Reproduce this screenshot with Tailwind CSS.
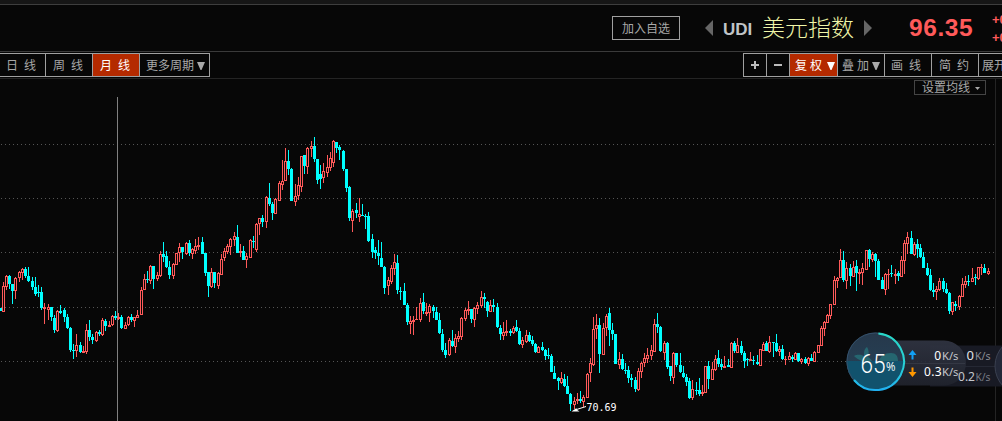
<!DOCTYPE html>
<html lang="zh-CN">
<head>
    <meta charset="UTF-8">
    <meta name="viewport" content="width=device-width, initial-scale=1.0">
    <title>美元指数</title>
    <script src="https://cdn.jsdelivr.net/npm/@tailwindcss/browser@4"></script>
</head>
<body class="w-[1002px] h-[421px] overflow-hidden bg-[#070707] text-[#a8a8a8] font-['Liberation_Sans','Noto_Sans_CJK_SC',sans-serif]">
    <div class="relative flex h-full flex-col overflow-hidden">

        <div class="h-[5px] shrink-0 border-b border-[#3e3e3e] bg-[#161616]"></div>

        <!-- Cotação -->
        <header class="flex h-[47px] shrink-0 items-center border-b border-[#3a3a3a] pl-[612px] whitespace-nowrap">
            <button class="flex h-6 w-[68px] shrink-0 items-center justify-center border border-[#a0a0a0] pt-px text-[12px] leading-none">加入自选</button>
            <svg class="ml-[25px] h-4 w-2 shrink-0" viewBox="0 0 8 16"><path d="M8 0v16L0 8z" fill="#666"/></svg>
            <span class="ml-[10px] w-[39px] shrink-0 pt-[2px] text-[17px] font-bold leading-none text-[#c0c4c8]">UDI</span>
            <span class="w-[102px] shrink-0 text-[23px] font-light leading-none text-[#f0f6a8]">美元指数</span>
            <svg class="h-4 w-2 shrink-0" viewBox="0 0 8 16"><path d="M0 0v16l8-8z" fill="#666"/></svg>
            <span class="ml-[37px] w-[83px] shrink-0 text-[24.5px] font-bold leading-none tracking-[0.6px] text-[#ff5a5a]">96.35</span>
            <div class="shrink-0 pt-[2px] text-[13px] font-bold leading-[18px] text-[#ff5a5a]">
                <div>+0</div>
                <div>+0</div>
            </div>
        </header>

        <!-- Períodos e ferramentas -->
        <nav class="mt-px flex h-6 shrink-0 justify-between text-[12px] leading-none whitespace-nowrap">
            <div class="flex shrink-0 border-y border-[#a0a0a0]">
                <div class="flex w-[46px] items-center gap-[6px] border-r border-[#a0a0a0] pl-[6px] pt-px"><span>日</span><span>线</span></div>
                <div class="flex w-[47px] items-center gap-[6px] border-r border-[#a0a0a0] pl-[7px] pt-px"><span>周</span><span>线</span></div>
                <div class="flex w-[47px] items-center gap-[6px] border-r border-[#a0a0a0] bg-[#b42a00] pl-[7px] pt-px text-white"><span>月</span><span>线</span></div>
                <div class="flex w-[70px] items-center gap-[3px] border-r border-[#a0a0a0] pl-[6px] pt-px">
                    <span>更多周期</span>
                    <svg class="h-2 w-2" viewBox="0 0 8 8"><path d="M0 0h8L4.500 8h-1z" fill="#aaa"/></svg>
                </div>
            </div>
            <div class="flex w-[259px] shrink-0 overflow-hidden border-y border-l border-[#a0a0a0]">
                <div class="flex w-[23px] shrink-0 items-center justify-center border-r border-[#a0a0a0]"><svg class="size-2" viewBox="0 0 8 8"><path d="M0 4h8M4 0v8" stroke="#bbb" stroke-width="2"/></svg></div>
                <div class="flex w-[23px] shrink-0 items-center justify-center border-r border-[#a0a0a0]"><svg class="size-2" viewBox="0 0 8 8"><path d="M0 4h8" stroke="#bbb" stroke-width="2"/></svg></div>
                <div class="flex w-12 shrink-0 items-center gap-[3px] border-r border-[#a0a0a0] bg-[#b42a00] pl-[5px] pt-px text-white">
                    <span>复</span><span>权</span>
                    <svg class="ml-[2px] h-2 w-2 shrink-0" viewBox="0 0 8 8"><path d="M0 0h8L4.500 8h-1z" fill="#fff"/></svg>
                </div>
                <div class="flex w-[47px] shrink-0 items-center gap-[3px] border-r border-[#a0a0a0] pl-[4px] pt-px">
                    <span>叠</span><span>加</span>
                    <svg class="h-2 w-2 shrink-0" viewBox="0 0 8 8"><path d="M0 0h8L4.500 8h-1z" fill="#aaa"/></svg>
                </div>
                <div class="flex w-[47px] shrink-0 items-center gap-[6px] border-r border-[#a0a0a0] pl-[6px] pt-px"><span>画</span><span>线</span></div>
                <div class="flex w-[47px] shrink-0 items-center gap-[6px] border-r border-[#a0a0a0] pl-[7px] pt-px"><span>简</span><span>约</span></div>
                <div class="flex shrink-0 items-center pl-[3px] pt-px">展开</div>
            </div>
        </nav>

        <!-- Gráfico -->
        <main class="relative mt-px h-[343px] shrink-0 border-t border-[#242424]">
            <svg id="chart" class="absolute left-0 top-[-79px] h-[421px] w-[1002px] pointer-events-none" viewBox="0 0 1002 421" shape-rendering="crispEdges">
                <path d="M1 144.500H995M1 198.500H995M1 252.500H995M1 307.500H995M1 361.500H995" stroke="#555" stroke-dasharray="1 3"/>
                <path d="M995.500 79V421" stroke="#242424"/>
                <path d="M117.500 97V421" stroke="#808080"/>
                <g id="candles"></g>
                <g shape-rendering="auto">
                    <path d="M586 406.500L575 410" stroke="#fff" stroke-width="1"/>
                    <path d="M571.500 411.500l5-3.500v1.500l3 2z" fill="#fff"/>
                    <text x="586.500" y="411" fill="#fff" font-size="10" font-family="DejaVu Sans Mono, monospace">70.69</text>
                </g>
            </svg>
            <div class="relative ml-[914px] mt-px flex h-[15px] w-[72px] items-center border border-[#444] pl-[7px] pt-px text-[12px] leading-none whitespace-nowrap">
                设置均线
                <svg class="ml-[5px] h-[3px] w-[5px]" viewBox="0 0 5 3"><path d="M0 0h5L2.500 3z" fill="#aaa"/></svg>
            </div>
        </main>

        <!-- Widget flutuante de memória e rede -->
        <svg class="absolute left-[830px] top-[320px] h-[101px] w-[172px] font-['Noto_Sans',sans-serif]" viewBox="830 320 172 101">
            <defs>
                <linearGradient id="pill" x1="0" y1="0" x2="0" y2="1"><stop offset="0" stop-color="#303442"/><stop offset="1" stop-color="#20232d"/></linearGradient>
                <linearGradient id="ring" x1="0" y1="0" x2="0" y2="1"><stop offset="0" stop-color="#28d8c8"/><stop offset=".6" stop-color="#28d0d8"/><stop offset="1" stop-color="#20b0f0"/></linearGradient>
                <linearGradient id="sky" x1="0" y1="0" x2="0" y2="1"><stop offset="0" stop-color="#26384b"/><stop offset="1" stop-color="#25445a"/></linearGradient>
                <clipPath id="ball"><circle cx="875.500" cy="361.500" r="29"/></clipPath>
            </defs>
            <rect x="930" y="345.500" width="85" height="41" fill="#181a24"/>
            <path d="M960 366.500H996" stroke="#252834"/>
            <circle cx="1024" cy="366" r="29" fill="#232838" stroke="#3a4050"/>
            <path d="M876 340.500H944a22 22.500 0 0 1 0 45H876z" fill="url(#pill)" fill-opacity=".93"/>
            <path d="M905 363.500H965" stroke="#3a3e4a" stroke-opacity=".7"/>
            <text x="966.500" y="360" font-size="13" fill="#e0e2e6">0</text>
            <text x="975" y="360" font-size="10.500" fill="#8a8d95" textLength="15.500" lengthAdjust="spacingAndGlyphs">K/s</text>
            <text x="958" y="381" font-size="13" fill="#c4c7cd" textLength="17" lengthAdjust="spacingAndGlyphs">0.2</text>
            <text x="975.500" y="381" font-size="10.500" fill="#777b84" textLength="15" lengthAdjust="spacingAndGlyphs">K/s</text>
            <path d="M912.500 350l4 5h-3v4.500h-2V355h-3z" fill="#12a0f4"/>
            <path d="M912.500 377l4-5h-3v-4.500h-2v4.500h-3z" fill="#ff9800"/>
            <text x="934.300" y="359.500" font-size="12" fill="#fff">0</text>
            <text x="942" y="359.500" font-size="11.500" fill="#c4c6cc" textLength="16.500" lengthAdjust="spacingAndGlyphs">K/s</text>
            <text x="924" y="376.300" font-size="12" fill="#fff" textLength="17.500">0.3</text>
            <text x="942" y="376.300" font-size="11.500" fill="#c4c6cc" textLength="16.500" lengthAdjust="spacingAndGlyphs">K/s</text>
            <g clip-path="url(#ball)">
                <rect x="846" y="332" width="60" height="60" fill="url(#sky)"/>
                <path d="M854 356c4-2 7-1 10 0 0-4 0-7 3-9 2 3 2 6 1 10 2 1 3 2 4 4H862c-3-1-6-3-8-5zM879 361c1-5 6-8 12-8 5 0 7 3 7 8z" fill="#256670"/>
                <rect x="846" y="361" width="60" height="31" fill="#11526d"/>
            </g>
            <circle cx="875.500" cy="361.500" r="28.500" fill="none" stroke="#34506a"/>
            <path d="M878.400 333.600A28.300 28.300 0 1 1 854 380" fill="none" stroke="url(#ring)" stroke-width="2"/>
            <text x="860.500" y="373" font-size="26" font-family="Roboto, sans-serif" font-weight="300" fill="#fff" textLength="25" lengthAdjust="spacingAndGlyphs">65</text>
            <text x="886" y="371" font-size="12.500" fill="#e8f0f4" textLength="9.500" lengthAdjust="spacingAndGlyphs">%</text>
        </svg>
    </div>

    <script>
        // x, máxima, topo do corpo, base do corpo, mínima, 1 = alta / 0 = baixa
        const data = `0 308 308 311 311 0;3 282 286 312 312 1;6 275 276 287 290 1;9 275 276 284 289 0;12 284 284 291 304 0;15 277 278 291 299 1;19 271 272 278 282 1;22 268 269 273 280 1;25 267 269 276 278 0;28 267 276 281 282 0
32 277 281 287 290 0;35 277 287 294 296 0;38 285 292 293 297 0;41 287 292 308 310 0;44 303 307 309 324 1;48 304 307 310 320 1;51 307 307 317 321 0;54 315 318 330 333 0;57 310 311 331 332 1;60 305 311 313 314 0
64 308 310 317 322 0;67 314 317 328 329 0;70 327 328 350 352 0;73 344 350 351 359 0;76 334 345 351 357 1;80 342 345 352 353 0;83 346 351 353 353 1;86 324 330 352 354 1;89 320 330 337 341 0;92 334 337 340 344 0
96 331 332 341 342 1;99 330 332 334 336 0;102 318 320 335 336 1;105 319 321 326 331 0;109 321 325 327 327 1;112 315 316 325 326 1;115 311 316 318 320 0;118 313 317 319 320 1;121 315 317 328 329 0;125 322 325 329 329 1
128 316 317 325 326 1;131 314 317 320 322 0;134 317 317 321 327 1;137 310 315 318 318 1;141 287 290 315 315 1;144 274 279 290 290 1;147 271 279 280 283 0;150 265 266 281 284 1;153 266 266 279 289 0;157 272 275 279 281 1
160 251 254 276 277 1;163 242 254 257 262 0;166 251 256 267 268 0;169 261 267 275 279 0;173 263 264 276 279 1;176 253 253 265 265 1;179 243 247 253 262 1;182 247 247 252 259 0;186 242 243 254 255 1;189 240 243 253 256 0
192 248 249 254 259 1;195 239 246 251 254 1;198 237 245 247 250 1;202 237 242 254 254 0;205 253 253 273 276 0;208 272 272 286 297 0;211 268 272 287 288 1;214 272 272 283 288 0;218 272 273 286 289 1;221 254 259 275 275 1
224 248 251 258 261 1;227 244 246 252 254 1;230 238 239 247 255 1;234 232 236 240 246 1;237 225 237 253 253 0;240 244 251 253 257 1;243 246 251 260 260 0;246 253 256 260 268 1;250 239 240 258 258 1;253 236 241 242 248 0
256 223 224 250 252 1;259 218 218 224 235 1;262 215 218 222 227 0;266 196 197 222 228 1;269 183 198 204 206 0;272 202 204 213 220 0;275 198 199 214 214 1;279 181 183 201 201 1;282 160 181 185 190 1;285 148 161 181 181 1
288 150 161 169 175 0;291 168 169 201 201 0;295 184 196 202 206 1;298 177 185 196 200 1;301 156 156 187 192 1;304 155 155 166 174 0;307 147 148 167 174 1;311 141 146 149 157 1;314 137 146 159 162 0;317 159 159 180 184 0
320 165 174 179 189 0;323 163 171 178 183 1;327 155 167 173 177 1;330 152 158 168 171 1;333 140 141 163 167 1;336 142 142 148 153 0;339 145 147 150 160 0;343 150 151 169 171 0;346 169 169 188 192 0;349 186 187 218 221 0
352 209 211 221 232 1;356 203 210 213 218 0;359 198 214 217 222 1;362 204 215 216 216 0;365 214 216 217 229 0;368 212 216 241 242 0;372 234 239 252 258 0;375 247 250 253 259 0;378 240 253 256 265 0;381 242 258 267 267 0
384 266 267 288 294 0;388 277 280 286 295 1;391 265 268 282 284 1;394 254 262 269 275 1;397 255 263 290 294 0;400 287 291 292 300 0;404 283 291 305 305 0;407 303 305 322 325 0;410 316 321 324 334 1;413 316 320 322 335 1
416 307 319 320 320 1;420 298 303 320 322 1;423 293 302 311 314 0;426 303 312 314 316 1;429 304 306 313 322 1;433 305 307 311 318 0;436 307 312 320 320 0;439 313 320 333 334 0;442 329 334 350 352 0;445 343 350 355 358 0
449 338 340 355 356 1;452 330 341 346 347 0;455 334 338 347 353 1;458 331 336 339 342 1;461 317 318 337 340 1;465 308 310 319 321 1;468 301 309 311 315 1;471 309 309 319 323 0;474 307 308 320 327 1;477 302 305 309 314 1
481 291 297 306 308 1;484 293 297 299 308 0;487 301 302 311 317 0;490 300 305 312 312 1;493 299 305 307 312 0;497 303 307 327 328 0;500 325 328 334 340 0;503 322 332 336 340 1;506 320 331 333 336 1;510 329 331 333 336 0
513 326 328 333 334 1;516 320 327 331 332 0;519 328 331 344 345 0;522 337 340 345 348 1;526 330 335 342 343 1;529 332 335 341 342 0;532 336 340 344 346 0;535 343 344 352 353 0;538 346 347 353 353 1;542 342 347 350 351 0
545 349 350 356 360 0;548 348 355 356 359 0;551 354 356 372 372 0;554 366 373 379 379 0;558 377 378 381 390 0;561 372 378 383 384 1;564 374 379 386 387 0;567 376 386 394 394 0;570 393 394 404 411 0;574 397 401 405 409 1
577 393 399 401 404 1;580 391 399 401 403 0;583 395 397 402 407 1;587 373 374 398 398 1;590 358 363 373 382 1;593 317 329 365 366 1;596 314 325 329 339 1;599 318 325 354 373 0;603 323 328 355 355 1;606 314 316 328 336 1
609 308 313 330 346 0;612 323 330 334 340 0;615 334 334 364 364 0;619 352 359 365 369 1;622 354 359 369 370 0;625 363 370 371 374 0;628 366 370 378 383 0;631 374 378 380 387 0;635 377 380 389 392 0;638 368 371 390 391 1
641 362 363 372 378 1;644 353 358 363 367 1;647 348 355 359 363 1;651 345 350 356 360 1;654 319 324 352 352 1;657 313 324 327 333 0;660 326 327 351 352 0;664 341 343 353 360 1;667 342 343 367 369 0;670 366 366 376 381 0
673 352 353 378 384 1;676 353 353 365 367 0;680 353 365 372 373 0;683 366 373 377 378 0;686 374 377 382 386 0;689 378 381 398 399 0;692 380 389 398 400 1;696 382 390 391 395 0;699 378 390 394 396 0;702 385 392 394 396 1
705 366 366 393 393 1;708 361 366 379 389 0;712 362 369 380 380 1;715 355 359 370 371 1;718 350 358 364 367 0;721 359 364 367 370 0;724 356 366 368 368 1;728 359 365 367 367 0;731 342 343 368 368 1;734 341 343 351 353 0
737 338 345 353 353 1;741 341 346 353 355 0;744 351 353 361 368 0;747 358 359 360 366 0;750 352 359 361 361 1;753 356 360 361 365 0;757 355 362 364 365 0;760 349 349 366 366 1;763 342 344 351 351 1;766 341 343 351 351 0
769 336 342 352 353 1;773 342 342 343 357 0;776 334 343 351 352 0;779 346 349 352 356 1;782 345 349 359 360 0;785 356 359 360 365 1;789 352 356 360 360 1;792 355 357 359 362 0;795 352 353 360 360 1;798 353 353 361 362 0
801 358 359 362 364 1;805 357 359 363 364 0;808 357 358 364 366 1;811 354 358 361 361 0;814 351 352 362 362 1;818 345 345 353 353 1;821 326 328 346 346 1;824 321 322 329 336 1;827 314 315 323 323 1;830 304 304 316 319 1
834 276 280 305 305 1;837 277 278 281 288 1;840 249 260 278 278 1;843 251 260 280 282 0;846 262 268 281 289 1;850 264 268 276 286 0;853 261 267 277 277 1;856 260 266 273 291 0;859 269 272 274 284 1;862 263 268 273 285 1
866 250 250 270 270 1;869 249 250 259 267 0;872 252 254 260 262 1;875 253 254 261 277 0;878 259 261 280 280 0;882 277 280 289 289 0;885 273 274 290 295 1;888 269 274 275 289 1;891 265 273 274 277 0;895 269 274 276 284 1
898 271 273 276 281 0;901 256 260 277 277 1;904 240 243 261 274 1;907 232 237 244 254 1;911 231 238 254 254 0;914 242 244 255 256 1;917 239 244 249 258 0;920 244 248 257 258 0;923 252 257 268 268 0;927 263 268 275 276 0
930 269 275 290 291 0;933 283 290 292 297 0;936 286 289 292 300 1;939 278 281 290 291 1;943 278 281 289 292 0;946 283 289 293 294 0;949 292 293 311 314 0;952 302 302 312 315 1;955 301 304 306 311 0;959 295 296 307 310 1
962 278 284 297 297 1;965 276 281 285 288 1;968 275 281 282 286 0;972 268 278 282 282 1;975 274 277 278 285 0;978 267 267 279 280 1;981 264 267 268 275 1;984 264 268 273 273 0;988 268 271 274 275 1`;

        let markup = '';
        data.split(/[;\n]/).forEach(row => {
            const [x, high, top, bottom, low, up] = row.trim().split(' ').map(Number);
            const color = up ? '#ff5a5a' : '#00ffff';
            const h = bottom - top;
            markup += `<rect x="${x}" y="${high}" width="1" height="${low - high}" fill="${color}"/>`;
            markup += `<rect x="${x - 1}" y="${top}" width="3" height="${h}" fill="${color}"/>`;
            if (up && h > 2) {
                markup += `<rect x="${x}" y="${top + 1}" width="1" height="${h - 2}" fill="#070707"/>`;
            }
        });
        document.getElementById('candles').innerHTML = markup;
    </script>
</body>
</html>
